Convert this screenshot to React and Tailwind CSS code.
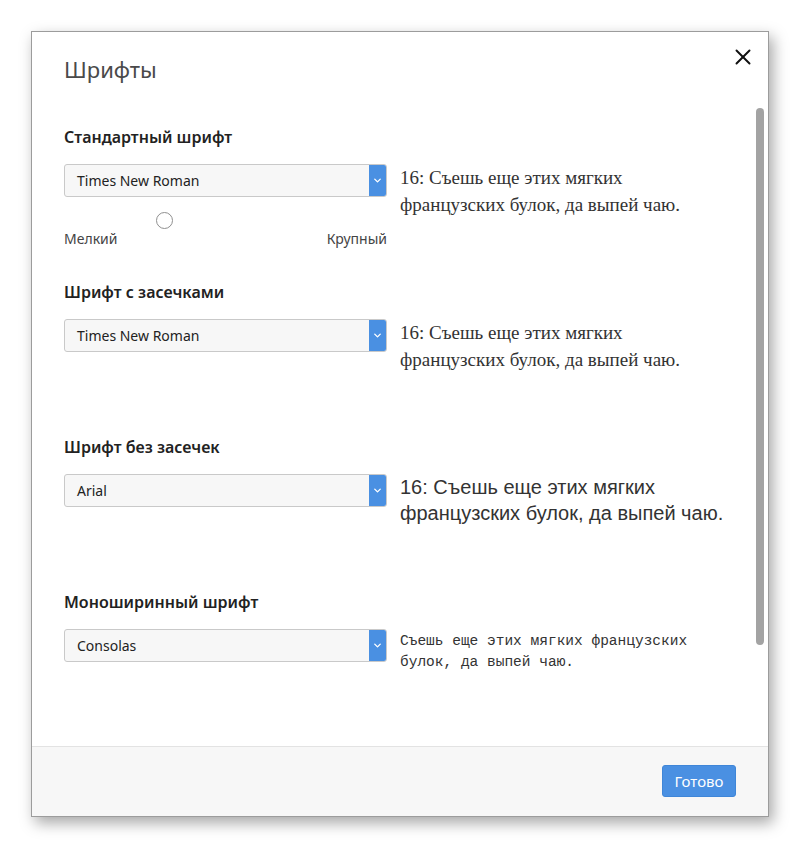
import { X, ChevronDown } from 'lucide-react'

const UI = { fontFamily: '"Segoe UI", "Noto Sans", sans-serif' }

const sections = [
  {
    title: 'Стандартный шрифт',
    value: 'Times New Roman',
    preview: '16: Съешь еще этих мягких французских булок, да выпей чаю.',
    previewClass: 'text-[19px] leading-[27px] text-[#333]',
    previewFont: '"Liberation Serif", "Times New Roman", serif',
    slider: true,
  },
  {
    title: 'Шрифт с засечками',
    value: 'Times New Roman',
    preview: '16: Съешь еще этих мягких французских булок, да выпей чаю.',
    previewClass: 'text-[19px] leading-[27px] text-[#333]',
    previewFont: '"Liberation Serif", "Times New Roman", serif',
  },
  {
    title: 'Шрифт без засечек',
    value: 'Arial',
    preview: '16: Съешь еще этих мягких французских булок, да выпей чаю.',
    previewClass: 'text-[20px] leading-[26px] text-[#333]',
    previewFont: '"Liberation Sans", Arial, sans-serif',
  },
  {
    title: 'Моноширинный шрифт',
    value: 'Consolas',
    preview: 'Съешь еще этих мягких французских булок, да выпей чаю.',
    previewClass: 'text-[14.5px] leading-[21px] text-[#333] pt-[2px]',
    previewFont: '"Liberation Mono", "Courier New", monospace',
  },
]

const FakeSelect = ({ value }) => (
  <div className="flex w-[323px] h-[33px] shrink-0 rounded-[3px] border border-[#c9c9c9] bg-[#f7f7f7] overflow-hidden">
    <div className="flex-1 flex items-center pl-3 text-[14px] text-[#222]">{value}</div>
    <div className="w-[17px] bg-[#4a90e2] flex items-center justify-center">
      <ChevronDown size={11} strokeWidth={3} className="text-white" />
    </div>
  </div>
)

const Section = ({ s }) => (
  <div className="h-[155px]">
    <h3 className="text-[16px] leading-[24px] font-semibold text-[#222]">{s.title}</h3>
    <div className="flex items-start mt-[15px]">
      <div className="w-[323px] shrink-0">
        <FakeSelect value={s.value} />
        {s.slider && (
          <div className="mt-[15px]">
            <div className="ml-[92px] w-[17px] h-[17px] rounded-full border border-[#8f8f8f] bg-white" />
            <div className="flex justify-between text-[14px] leading-[20px] text-[#444]">
              <span>Мелкий</span>
              <span>Крупный</span>
            </div>
          </div>
        )}
      </div>
      <p className={`ml-[13px] w-[325px] ${s.previewClass}`} style={{ fontFamily: s.previewFont }}>
        {s.preview}
      </p>
    </div>
  </div>
)

export default function App() {
  return (
    <div className="min-h-[849px] bg-white p-[31px]" style={UI}>
      <div className="w-[738px] h-[786px] flex flex-col border border-[#9c9c9c] bg-white shadow-[4px_6px_14px_rgba(0,0,0,0.35)]">
        {/* Header */}
        <div className="h-[73px] shrink-0 flex items-start justify-between pl-[32px] pr-[12px]">
          <h2 className="pt-[22px] text-[22px] leading-[30px] text-[#4a4a4a]">Шрифты</h2>
          <button className="mt-[12px] text-[#111]">
            <X size={26} strokeWidth={1.8} />
          </button>
        </div>

        {/* Body */}
        <div className="flex-1 flex">
          <div className="flex-1 pl-[32px] pt-[20px]">
            {sections.map((s) => (
              <Section key={s.title} s={s} />
            ))}
          </div>
          <div className="w-[8px] mr-[4px]">
            <div className="mt-[3px] h-[537px] rounded-full bg-[#a3a3a3]" />
          </div>
        </div>

        {/* Footer */}
        <div className="h-[70px] shrink-0 border-t border-[#e3e3e3] bg-[#f7f7f7] flex justify-end items-start pt-[18px] pr-[32px]">
          <button className="w-[74px] h-[32px] rounded-[3px] bg-[#4a90e2] border border-[#3f86d8] text-white text-[15px]">
            Готово
          </button>
        </div>
      </div>
    </div>
  )
}
